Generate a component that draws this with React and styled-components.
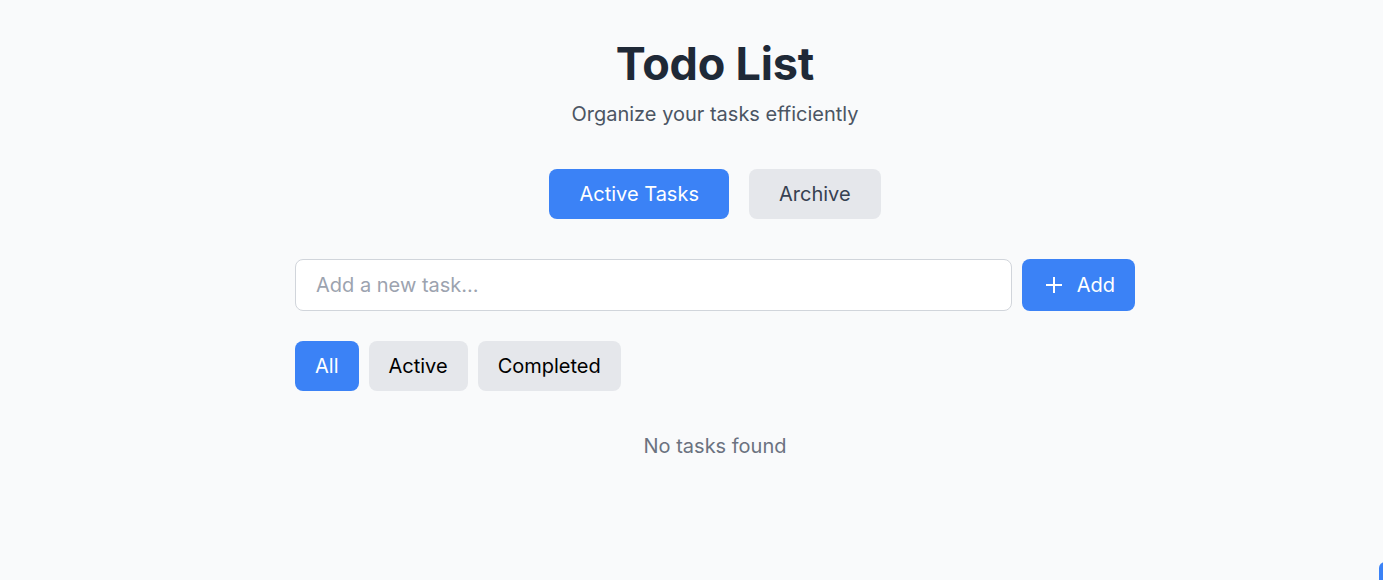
import React, { useState } from 'react';
import styled, { createGlobalStyle } from 'styled-components';

const GlobalStyle = createGlobalStyle`
  html, body {
    margin: 0;
    padding: 0;
    background: #f9fafb;
    font-family: Inter, "Noto Sans", sans-serif;
    overflow: hidden;
  }
`;

const Page = styled.div`
  min-height: 580px;
  padding: 38px 0 0 47px;
  box-sizing: border-box;
`;

const Container = styled.div`
  width: 840px;
  margin: 0 auto;
`;

const Header = styled.header`
  text-align: center;
`;

const Title = styled.h1`
  margin: 0;
  font-size: 45px;
  line-height: 52px;
  font-weight: 700;
  letter-spacing: -0.2px;
  color: #1f2937;
`;

const Subtitle = styled.p`
  margin: 10px 0 0;
  font-size: 20px;
  line-height: 28px;
  color: #4b5563;
`;

const Tabs = styled.div`
  display: flex;
  justify-content: center;
  gap: 20px;
  margin-top: 41px;
`;

const TabButton = styled.button`
  border: none;
  border-radius: 8px;
  padding: 10px 30px;
  font-family: inherit;
  font-size: 20px;
  line-height: 30px;
  cursor: pointer;
  background: ${p => (p.$active ? '#3b82f6' : '#e5e7eb')};
  color: ${p => (p.$active ? '#ffffff' : '#374151')};
`;

const AddRow = styled.form`
  display: flex;
  gap: 10px;
  margin-top: 40px;
`;

const TaskInput = styled.input`
  flex: 1;
  height: 52px;
  box-sizing: border-box;
  border: 1px solid #d1d5db;
  border-radius: 8px;
  padding: 0 20px;
  font-family: inherit;
  font-size: 20px;
  color: #111827;
  background: #ffffff;
  outline: none;

  &::placeholder {
    color: #9ca3af;
  }
`;

const AddButton = styled.button`
  display: flex;
  align-items: center;
  gap: 14px;
  height: 52px;
  padding: 0 20px 0 23px;
  border: none;
  border-radius: 8px;
  background: #3b82f6;
  color: #ffffff;
  font-family: inherit;
  font-size: 20px;
  cursor: pointer;
`;

const Filters = styled.div`
  display: flex;
  gap: 10px;
  margin-top: 30px;
`;

const FilterButton = styled.button`
  border: none;
  border-radius: 8px;
  padding: 0 20px;
  height: 50px;
  font-family: inherit;
  font-size: 20px;
  cursor: pointer;
  background: ${p => (p.$active ? '#3b82f6' : '#e5e7eb')};
  color: ${p => (p.$active ? '#ffffff' : '#000000')};
`;

const Empty = styled.p`
  margin: 41px 0 0;
  text-align: center;
  font-size: 20px;
  line-height: 28px;
  color: #6b7280;
`;

const FloatingTab = styled.div`
  position: fixed;
  right: -20px;
  bottom: -20px;
  width: 24px;
  height: 38px;
  border-radius: 6px;
  background: #3b82f6;
`;

const PlusIcon = () => (
  <svg width="18" height="18" viewBox="0 0 18 18" fill="none" stroke="currentColor" strokeWidth="2" strokeLinecap="butt">
    <line x1="9" y1="1" x2="9" y2="17" />
    <line x1="1" y1="9" x2="17" y2="9" />
  </svg>
);

export default function App() {
  const [tab, setTab] = useState('active');
  const [filter, setFilter] = useState('all');
  const [text, setText] = useState('');

  return (
    <Page>
      <GlobalStyle />
      <Container>
        <Header>
          <Title>Todo List</Title>
          <Subtitle>Organize your tasks efficiently</Subtitle>
        </Header>

        <Tabs>
          <TabButton $active={tab === 'active'} onClick={() => setTab('active')}>
            Active Tasks
          </TabButton>
          <TabButton $active={tab === 'archive'} onClick={() => setTab('archive')}>
            Archive
          </TabButton>
        </Tabs>

        <AddRow onSubmit={e => e.preventDefault()}>
          <TaskInput
            placeholder="Add a new task..."
            value={text}
            onChange={e => setText(e.target.value)}
          />
          <AddButton type="submit">
            <PlusIcon />
            Add
          </AddButton>
        </AddRow>

        <Filters>
          {['All', 'Active', 'Completed'].map(f => (
            <FilterButton
              key={f}
              $active={filter === f.toLowerCase()}
              onClick={() => setFilter(f.toLowerCase())}
            >
              {f}
            </FilterButton>
          ))}
        </Filters>

        <Empty>No tasks found</Empty>
      </Container>
      <FloatingTab />
    </Page>
  );
}
